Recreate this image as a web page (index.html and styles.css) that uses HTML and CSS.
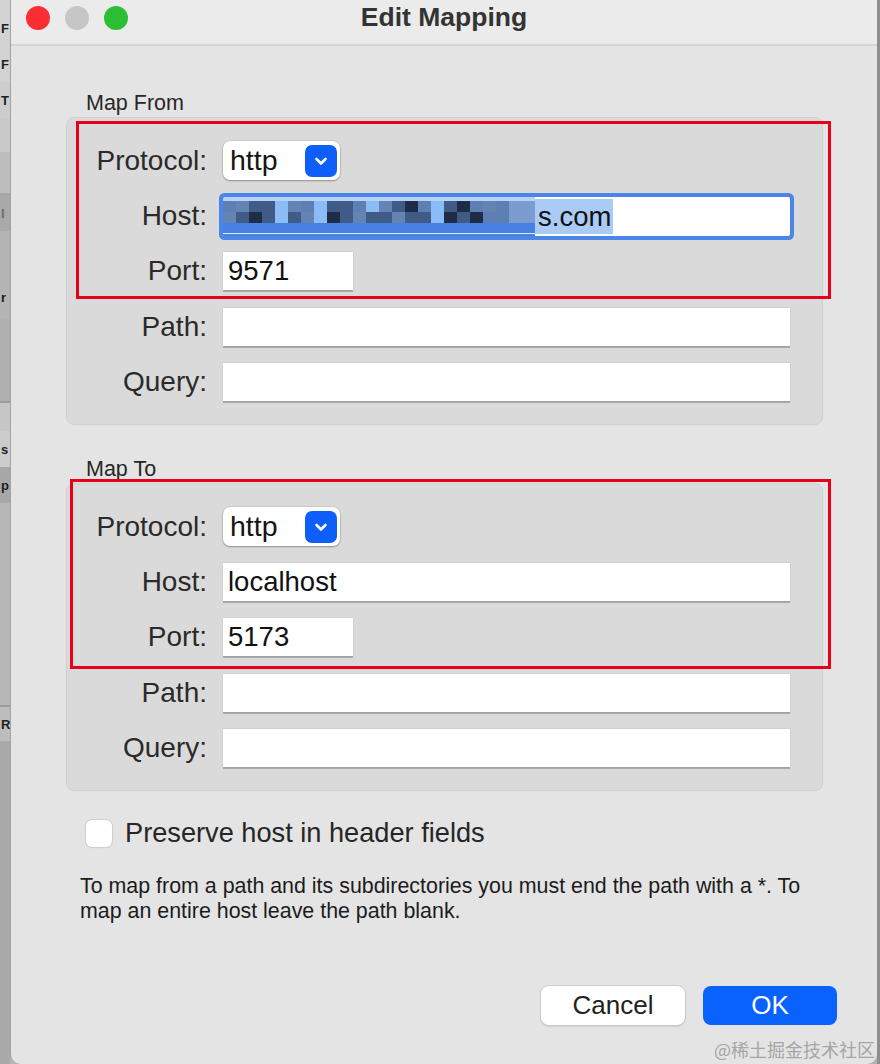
FILE: index.html
```html
<!DOCTYPE html>
<html>
<head>
<meta charset="utf-8">
<link rel="stylesheet" href="styles.css">
</head>
<body>
<div class="page">
  <div class="behind">
    <div class="seg s1"><span>F</span></div>
    <div class="seg s1"><span>F</span></div>
    <div class="seg s2"><span>T</span></div>
    <div class="seg s3"></div>
    <div class="seg s4"></div>
    <div class="seg s5"><span>l</span></div>
    <div class="seg s6"></div>
    <div class="seg s6"><span>r</span></div>
    <div class="seg s7"></div>
    <div class="seg s8"></div>
    <div class="seg s9"><span>s</span></div>
    <div class="seg s10"><span>p</span></div>
    <div class="seg s11"></div>
    <div class="seg s12"><span>R</span></div>
    <div class="seg s13"></div>
  </div>

  <div class="window">
    <div class="titlebar">
      <div class="lights">
        <span class="light red"></span>
        <span class="light gray"></span>
        <span class="light green"></span>
      </div>
      <div class="title">Edit Mapping</div>
      <div></div>
    </div>

    <div class="content">
      <div class="group-label">Map From</div>
      <div class="group">
        <div class="row">
          <div class="label">Protocol:</div>
          <div class="popup"><span>http</span><span class="chev"><svg width="32" height="32" viewBox="0 0 32 32"><polyline points="11.5,14 16,18.5 20.5,14" fill="none" stroke="#fff" stroke-width="2.6" stroke-linecap="round" stroke-linejoin="round"/></svg></span></div>
        </div>
        <div class="row">
          <div class="label">Host:</div>
          <div class="field wide focus">
            <div class="mosaic">
              <div class="m-top"></div>
              <div class="m-grid">
                <i class="b6"></i><i class="b2"></i><i class="b3"></i><i class="b3"></i><i class="b1"></i><i class="b2"></i><i class="b6"></i><i class="b1"></i><i class="b3"></i><i class="b3"></i><i class="b6"></i><i class="b1"></i><i class="b2"></i><i class="b3"></i><i class="b4"></i><i class="b6"></i><i class="b1"></i><i class="b3"></i><i class="b4"></i><i class="b6"></i><i class="b2"></i><i class="b6"></i><i class="b7"></i><i class="b7"></i>
                <i class="b2"></i><i class="b3"></i><i class="b4"></i><i class="b3"></i><i class="b1"></i><i class="b3"></i><i class="b2"></i><i class="b1"></i><i class="b4"></i><i class="b3"></i><i class="b2"></i><i class="b3"></i><i class="b3"></i><i class="b2"></i><i class="b3"></i><i class="b3"></i><i class="b1"></i><i class="b4"></i><i class="b3"></i><i class="b4"></i><i class="b6"></i><i class="b6"></i><i class="b7"></i><i class="b7"></i>
              </div>
              <div class="m-blue"></div>
              <div class="m-line"></div>
              <div class="m-blue2"></div>
            </div>
            <span class="sel">s.com</span>
          </div>
        </div>
        <div class="row">
          <div class="label">Port:</div>
          <div class="field port">9571</div>
        </div>
        <div class="row">
          <div class="label">Path:</div>
          <div class="field wide"></div>
        </div>
        <div class="row">
          <div class="label">Query:</div>
          <div class="field wide"></div>
        </div>
      </div>

      <div class="group-label second">Map To</div>
      <div class="group">
        <div class="row">
          <div class="label">Protocol:</div>
          <div class="popup"><span>http</span><span class="chev"><svg width="32" height="32" viewBox="0 0 32 32"><polyline points="11.5,14 16,18.5 20.5,14" fill="none" stroke="#fff" stroke-width="2.6" stroke-linecap="round" stroke-linejoin="round"/></svg></span></div>
        </div>
        <div class="row">
          <div class="label">Host:</div>
          <div class="field wide">localhost</div>
        </div>
        <div class="row">
          <div class="label">Port:</div>
          <div class="field port">5173</div>
        </div>
        <div class="row">
          <div class="label">Path:</div>
          <div class="field wide"></div>
        </div>
        <div class="row">
          <div class="label">Query:</div>
          <div class="field wide"></div>
        </div>
      </div>

      <div class="check-row">
        <span class="checkbox"></span>
        <span class="check-label">Preserve host in header fields</span>
      </div>

      <p class="note">To map from a path and its subdirectories you must end the path with a *. To<br>map an entire host leave the path blank.</p>

      <div class="buttons">
        <button class="btn cancel">Cancel</button>
        <button class="btn ok">OK</button>
      </div>
    </div>
  </div>

  <div class="edge"></div>

  <div class="annot annot-from"></div>
  <div class="annot annot-to"></div>
  <div class="watermark">@稀土掘金技术社区</div>
</div>
</body>
</html>
```

FILE: styles.css
```css
* { box-sizing: border-box; }

html, body {
  margin: 0;
  padding: 0;
  width: 880px;
  height: 1064px;
  overflow: hidden;
  background: #b4b4b4;
  font-family: "Liberation Sans", Arial, sans-serif;
}

.page {
  position: relative;
  width: 880px;
  height: 1064px;
  display: flex;
}

/* window behind, on the left */
.behind {
  width: 10px;
  flex: none;
  display: flex;
  flex-direction: column;
  overflow: hidden;
}
.seg {
  display: flex;
  align-items: center;
  font-size: 13px;
  font-weight: bold;
  color: #1e1e1e;
  padding-left: 1px;
  white-space: nowrap;
}
.s1 { height: 36px; background: #d2d2d2; }
.s1:first-child { height: 46px; padding-top: 10px; }
.s2 { height: 36px; background: #cdcdcd; }
.s3 { height: 34px; background: #c9c9c9; }
.s4 { height: 43px; background: #bdbdbd; border-bottom: 2px solid #a6a6a6; }
.s5 { height: 36px; background: #a9a9a9; color: #6b6b6b; }
.s6 { height: 44px; background: #b4b4b4; }
.s7 { height: 84px; background: #b0b0b0; border-bottom: 2px solid #9d9d9d; }
.s8 { height: 28px; background: #c6c6c6; }
.s9 { height: 36px; background: #cbcbcb; }
.s10 { height: 36px; background: #a7a7a7; }
.s11 { height: 202px; background: #b7b7b7; }
.s12 { height: 36px; background: #bdbdbd; border-top: 2px solid #9c9c9c; }
.s13 { flex: 1; background: #a9a9a9; }

.edge {
  width: 3px;
  flex: none;
  background: #8f8f8f;
}

/* dialog window */
.window {
  width: 867px;
  flex: none;
  height: 1064px;
  background: #e4e4e4;
  border-left: 1px solid #a3a3a3;
  border-radius: 0 0 10px 10px;
  display: flex;
  flex-direction: column;
}

.titlebar {
  height: 46px;
  flex: none;
  background: #ebebeb;
  border-bottom: 2px solid #d4d4d4;
  display: grid;
  grid-template-columns: 1fr auto 1fr;
  align-items: start;
}
.lights {
  display: flex;
  gap: 15px;
  padding: 6px 0 0 15px;
}
.light {
  width: 24px;
  height: 24px;
  border-radius: 50%;
  display: block;
}
.red { background: #fb2e34; }
.gray { background: #c6c6c6; }
.green { background: #2cbf33; }

.title {
  font-size: 26.5px;
  font-weight: bold;
  color: #333333;
  line-height: 34px;
  padding-top: 0;
}

.content {
  padding: 45px 54px 0 55px;
  display: flex;
  flex-direction: column;
}

.group-label {
  font-size: 21.5px;
  line-height: 24px;
  color: #272727;
  padding-left: 20px;
  margin-bottom: 2px;
}
.group-label.second { margin-top: 32px; }

.group {
  background: #dadada;
  border: 1px solid #d0d0d0;
  border-radius: 8px;
  padding: 23px 33px 23px 0;
  display: flex;
  flex-direction: column;
  gap: 17.5px;
}

.row {
  height: 38px;
  display: grid;
  grid-template-columns: 140px auto;
  column-gap: 16px;
  align-items: center;
  justify-content: start;
}

.label {
  font-size: 28px;
  color: #2a2a2a;
  text-align: right;
  white-space: nowrap;
}

.popup {
  width: 117px;
  height: 39px;
  background: #ffffff;
  border-radius: 7px;
  box-shadow: 0 0 0 0.5px rgba(0,0,0,0.12), 0 1px 2px rgba(0,0,0,0.3);
  display: flex;
  align-items: center;
  justify-content: space-between;
  padding: 0 3px 0 7px;
  font-size: 28.5px;
  color: #151515;
}
.chev {
  width: 32px;
  height: 32px;
  background: #0d5efb;
  border-radius: 7px;
  display: block;
}
.chev svg { display: block; }

.field {
  height: 38px;
  background: #ffffff;
  box-shadow: 0 0 0 0.5px rgba(0,0,0,0.08), 0 1.5px 0.5px rgba(0,0,0,0.22);
  display: flex;
  align-items: center;
  padding-left: 5px;
  font-size: 27.5px;
  color: #111111;
}
.field.wide { width: 567px; }
.field.port { width: 130px; }

.field.focus {
  height: 39px;
  padding-left: 0;
  border-radius: 2px;
  box-shadow: 0 0 0 4px #4b85e8;
  overflow: hidden;
  align-items: stretch;
}

.mosaic {
  width: 312px;
  flex: none;
  display: flex;
  flex-direction: column;
  background: #4680e2;
}
.m-top { height: 4px; background: #b7d3f8; }
.m-grid {
  display: grid;
  grid-template-columns: repeat(24, 13px);
  grid-auto-rows: 11px;
}
.m-grid i { display: block; }
.b1 { background: #8cbcf6; }
.b2 { background: #6584b4; }
.b3 { background: #3f5b86; }
.b4 { background: #1f2c45; }
.b6 { background: #5d7fb3; }
.b7 { background: #7c9bd0; }
.m-blue { height: 10px; background: #4680e2; }
.m-line { height: 1px; background: #e2ecfc; }
.m-blue2 { flex: 1; background: #4680e2; }

.sel {
  align-self: center;
  background: #a9cbf6;
  height: 35px;
  line-height: 35px;
  padding: 0 2px 0 3px;
  font-size: 27.5px;
  color: #111111;
}

.check-row {
  margin-top: 28px;
  height: 28px;
  display: flex;
  align-items: center;
  padding-left: 20px;
}
.checkbox {
  width: 26px;
  height: 27px;
  background: #ffffff;
  border-radius: 6px;
  box-shadow: 0 0 0 1px #cfcfcf, 0 1px 1px rgba(0,0,0,0.12);
  display: block;
}
.check-label {
  margin-left: 13px;
  font-size: 27.2px;
  color: #262626;
}

.note {
  margin: 27px 0 0 14px;
  font-size: 21.4px;
  line-height: 25px;
  color: #1c1c1c;
  white-space: nowrap;
}

.buttons {
  margin-top: 62px;
  margin-right: -14px;
  display: flex;
  justify-content: flex-end;
  gap: 18px;
}
.btn {
  height: 39px;
  border: none;
  border-radius: 8px;
  font-family: "Liberation Sans", Arial, sans-serif;
  font-size: 26px;
  padding: 0;
}
.cancel {
  width: 144px;
  background: #ffffff;
  color: #222222;
  box-shadow: 0 0 0 1px #cbcbcb, 0 1px 2px rgba(0,0,0,0.25);
}
.ok {
  width: 134px;
  background: #0a62fe;
  color: #ffffff;
}

/* annotations over the dialog */
.annot {
  position: absolute;
  border: 3px solid #e6001a;
}
.annot-from { left: 76px; top: 121px; width: 755px; height: 178px; }
.annot-to { left: 70px; top: 479px; width: 761px; height: 190px; }

.watermark {
  position: absolute;
  right: 5px;
  bottom: 3px;
  font-family: "Noto Sans CJK SC", sans-serif;
  font-size: 18px;
  line-height: 24px;
  color: #a6a6a6;
}
```
